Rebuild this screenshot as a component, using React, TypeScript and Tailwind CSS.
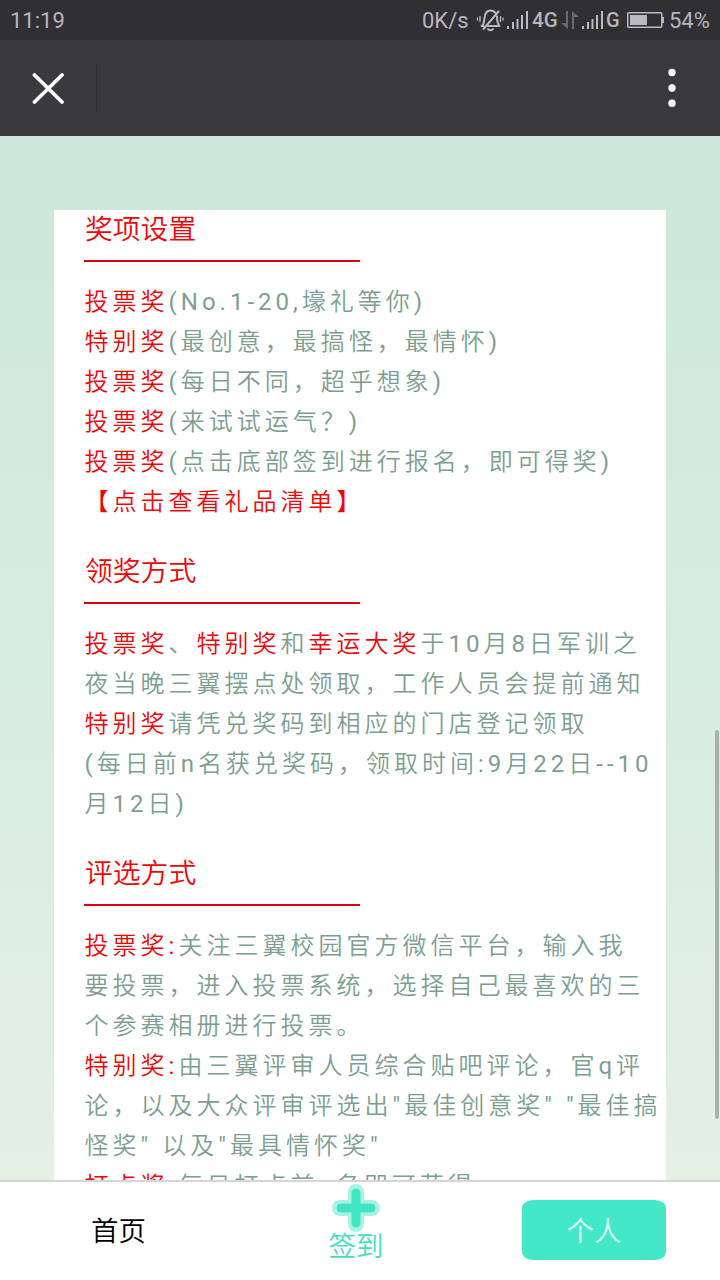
import type { ReactNode } from "react";

function Red({ children }: { children: ReactNode }) {
  return <span className="text-[#f00506]">{children}</span>;
}

function Section({ title, first = false, lines }: { title: string; first?: boolean; lines: ReactNode[] }) {
  return (
    <section className={first ? "" : "pt-[30px]"}>
      <h2 className="mb-2.5 h-10 pl-px text-[27.800px] leading-10 text-[#f00506]">{title}</h2>
      <div className="mb-5 h-0.5 w-[276px] bg-[#e2000c]" />
      <div className="pl-[0.600px]">
        {lines.map((line, i) => (
          <p key={i} className="h-10 whitespace-pre text-2xl leading-10 tracking-[4px] text-[#7c9e90]">
            {line}
          </p>
        ))}
      </div>
    </section>
  );
}

function Signal() {
  return (
    <svg className="h-5 w-[22px]" viewBox="0 0 22 20" fill="#bbbabf">
      <rect x="0" y="16" width="2" height="3" />
      <rect x="5" y="12" width="2" height="7" />
      <rect x="9.5" y="9" width="2" height="10" />
      <rect x="14" y="5" width="2" height="14" />
      <rect x="19" y="1" width="2" height="18" />
    </svg>
  );
}

function StatusBar() {
  return (
    <div className="flex h-10 shrink-0 items-center bg-[#302f34] pl-2.5 pr-2.5 text-[22px] leading-10 text-[#b7b6bb]">
      <span className="mt-0.5">11:19</span>
      <span className="ml-auto mt-0.5 w-[48px] whitespace-nowrap">0K/s</span>
      <svg className="ml-1.5 h-6 w-7" viewBox="0 0 28 24" fill="none" stroke="#bbbabf" strokeWidth="2" strokeLinecap="round" strokeLinejoin="round">
        <path d="M6 18c2-2 2-4 2.500-8C9 5 11 2.500 14.500 2.500c2 0 3.500.8 4.500 2M21 8.500c0 5 .5 7 2.500 9.500H12M5.500 18h2M7.500 21 22.500 3.500M12 21c1 1.500 4 1.500 5 0" />
        <path d="M4 8.500v5M1.500 10v2M24.500 8.500v5M27 10v2" strokeWidth="1.3" />
      </svg>
      <span className="ml-[3px] flex"><Signal /></span>
      <span className="ml-[3px] w-[26px] text-[20.500px] font-medium">4G</span>
      <svg className="ml-[3px] h-5 w-[18px]" viewBox="0 0 18 20" fill="#6b6a6f">
        <path d="M5 1h2v18L0 13h5zM11 19h2V7h5l-7-6z" />
      </svg>
      <span className="ml-[3px] flex"><Signal /></span>
      <span className="ml-0.5 w-[15px] text-[20px] font-medium">G</span>
      <svg className="ml-[6px] h-4 w-[38px]" viewBox="0 0 38 16" fill="none">
        <rect x="0.75" y="0.75" width="34" height="14.500" rx="1" stroke="#bbbabf" strokeWidth="1.500" />
        <rect x="3" y="3" width="17" height="10" fill="#bbbabf" />
        <path d="M35 5h2v6h-2z" fill="#bbbabf" />
      </svg>
      <span className="ml-[4px] mt-0.5 w-[41px] whitespace-nowrap">54%</span>
    </div>
  );
}

function TitleBar() {
  return (
    <header className="flex h-24 shrink-0 items-center border-b border-[#343c3e] bg-[#3a393e]">
      <svg className="ml-8 h-8 w-8" viewBox="0 0 32 32" stroke="#fff" strokeWidth="3.800" strokeLinecap="round">
        <path d="M2.500 3 30 30M30 3 2.500 30" />
      </svg>
      <div className="ml-8 h-12 w-px bg-[#303035]" />
      <svg className="ml-auto mr-11 h-[39px] w-2" viewBox="0 0 8 39" fill="#fff">
        <circle cx="4" cy="4.500" r="3.700" />
        <circle cx="4" cy="20" r="3.700" />
        <circle cx="4" cy="35.300" r="3.700" />
      </svg>
    </header>
  );
}

export default function App() {
  return (
    <div className="flex h-[1280px] w-[720px] flex-col overflow-hidden font-[Roboto,'Noto_Sans_CJK_SC_DemiLight','Noto_Sans_CJK_SC',sans-serif]" lang="zh-CN">
      <StatusBar />
      <TitleBar />
      <main className="relative h-[1044px] shrink-0 overflow-hidden bg-linear-to-b from-[#cbe8da] to-[#e4f0e3] pl-[54px] pt-[74px]">
        <article className="h-[1010px] w-[612px] bg-white pl-[30px]">
          <Section
            first
            title="奖项设置"
            lines={[
              <><Red>投票奖</Red>(No.1-20,壕礼等你)</>,
              <><Red>特别奖</Red>(最创意，最搞怪，最情怀)</>,
              <><Red>投票奖</Red>(每日不同，超乎想象)</>,
              <><Red>投票奖</Red>(来试试运气？)</>,
              <><Red>投票奖</Red>(点击底部签到进行报名，即可得奖)</>,
              <Red>【点击查看礼品清单】</Red>,
            ]}
          />
          <Section
            title="领奖方式"
            lines={[
              <><Red>投票奖</Red>、<Red>特别奖</Red>和<Red>幸运大奖</Red>于10月8日军训之</>,
              "夜当晚三翼摆点处领取，工作人员会提前通知",
              <><Red>特别奖</Red>请凭兑奖码到相应的门店登记领取</>,
              "(每日前n名获兑奖码，领取时间:9月22日--10",
              "月12日)",
            ]}
          />
          <Section
            title="评选方式"
            lines={[
              <><Red>投票奖:</Red>关注三翼校园官方微信平台，输入我</>,
              "要投票，进入投票系统，选择自己最喜欢的三",
              "个参赛相册进行投票。",
              <><Red>特别奖:</Red>由三翼评审人员综合贴吧评论，官q评</>,
              "论，以及大众评审评选出\"最佳创意奖\" \"最佳搞",
              "怪奖\" 以及\"最具情怀奖\"",
              <><Red>打点奖:</Red>每日打点前n名即可获得</>,
            ]}
          />
        </article>
        <div className="absolute right-px top-[594px] h-[389px] w-1 rounded-full bg-[#a7b2ab]" />
      </main>
      <nav className="flex h-[100px] shrink-0 border-t-2 border-[#d4d6d5] bg-white text-[27.500px]">
        <a className="flex w-[237px] items-center justify-center pt-0.5 text-black">首页</a>
        <a className="flex w-[238px] flex-col items-center text-[#3fe0bd]">
          <svg className="mt-0.5 h-12 w-12" viewBox="0 0 48 48" strokeLinecap="round">
            <path d="M24 8v32M8 24h32" stroke="#aaf1e5" strokeWidth="16" />
            <path d="M24 9v30M9 24h30" stroke="#40e6c3" strokeWidth="9" />
          </svg>
          <span className="-mt-px leading-8">签到</span>
        </a>
        <a className="ml-[47px] mt-[18px] flex h-[60px] w-36 items-center justify-center rounded-[12px/8px] bg-[#42e8c7] pt-1 text-[#e4fff9]">个人</a>
      </nav>
    </div>
  );
}
